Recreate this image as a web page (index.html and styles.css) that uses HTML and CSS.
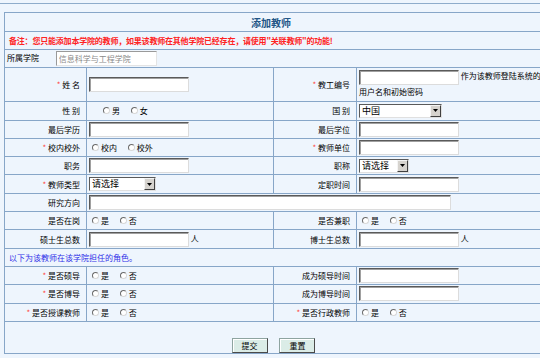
FILE: index.html
```html
<!DOCTYPE html>
<html lang="zh">
  <head>
    <meta charset="UTF-8" />
    <title>添加教师</title>
    <link rel="stylesheet" href="styles.css">
  </head>
  <body>
    <div class="topbar"></div>
    <form id="teacher-form">
      <table class="form-table">
        <colgroup>
          <col class="c1" />
          <col class="c2" />
          <col class="c3" />
          <col class="c4" />
        </colgroup>
        <tr class="title">
          <td colspan="4">添加教师</td>
        </tr>
        <tr class="note">
          <td colspan="4">备注：您只能添加本学院的教师，如果该教师在其他学院已经存在，请使用"关联教师"的功能!</td>
        </tr>
        <tr>
          <td colspan="4" class="college">
            所属学院 <input class="txt readonly" type="text" value="信息科学与工程学院" readonly />
          </td>
        </tr>
        <tr class="tall">
          <td class="label"><span class="req">*</span> 姓&nbsp;名</td>
          <td><input class="txt" type="text" /></td>
          <td class="label"><span class="req">*</span> 教工编号</td>
          <td class="top"><input class="txt" type="text" /> 作为该教师登陆系统的用户名和初始密码</td>
        </tr>
        <tr>
          <td class="label">性&nbsp;别</td>
          <td class="radios indent">
            <label><input type="radio" name="sex" />男</label>
            <label><input type="radio" name="sex" />女</label>
          </td>
          <td class="label">国&nbsp;别</td>
          <td>
            <span class="sel wide">
              <select><option>中国</option></select>
              <span class="arrow"><svg width="5" height="3" viewBox="0 0 5 3"><path d="M0 0h5L2.5 3z" fill="#000"/></svg></span>
            </span>
          </td>
        </tr>
        <tr>
          <td class="label">最后学历</td>
          <td><input class="txt" type="text" /></td>
          <td class="label">最后学位</td>
          <td><input class="txt" type="text" /></td>
        </tr>
        <tr>
          <td class="label"><span class="req">*</span> 校内校外</td>
          <td class="radios">
            <label><input type="radio" name="inout" />校内</label>
            <label><input type="radio" name="inout" />校外</label>
          </td>
          <td class="label"><span class="req">*</span> 教师单位</td>
          <td><input class="txt" type="text" /></td>
        </tr>
        <tr>
          <td class="label">职务</td>
          <td><input class="txt" type="text" /></td>
          <td class="label">职称</td>
          <td>
            <span class="sel short">
              <select><option>请选择</option></select>
              <span class="arrow"><svg width="5" height="3" viewBox="0 0 5 3"><path d="M0 0h5L2.5 3z" fill="#000"/></svg></span>
            </span>
          </td>
        </tr>
        <tr>
          <td class="label"><span class="req">*</span> 教师类型</td>
          <td>
            <span class="sel mid">
              <select><option>请选择</option></select>
              <span class="arrow"><svg width="5" height="3" viewBox="0 0 5 3"><path d="M0 0h5L2.5 3z" fill="#000"/></svg></span>
            </span>
          </td>
          <td class="label">定职时间</td>
          <td><input class="txt" type="text" /></td>
        </tr>
        <tr>
          <td class="label">研究方向</td>
          <td colspan="3"><input class="txt long" type="text" /></td>
        </tr>
        <tr>
          <td class="label">是否在岗</td>
          <td class="radios">
            <label><input type="radio" name="onduty" />是</label>
            <label><input type="radio" name="onduty" />否</label>
          </td>
          <td class="label">是否兼职</td>
          <td class="radios">
            <label><input type="radio" name="parttime" />是</label>
            <label><input type="radio" name="parttime" />否</label>
          </td>
        </tr>
        <tr>
          <td class="label">硕士生总数</td>
          <td><input class="txt" type="text" /> 人</td>
          <td class="label">博士生总数</td>
          <td><input class="txt" type="text" /> 人</td>
        </tr>
        <tr class="roles">
          <td colspan="4">以下为该教师在该学院担任的角色。</td>
        </tr>
        <tr>
          <td class="label"><span class="req">*</span> 是否硕导</td>
          <td class="radios">
            <label><input type="radio" name="master" />是</label>
            <label><input type="radio" name="master" />否</label>
          </td>
          <td class="label">成为硕导时间</td>
          <td><input class="txt" type="text" /></td>
        </tr>
        <tr>
          <td class="label"><span class="req">*</span> 是否博导</td>
          <td class="radios">
            <label><input type="radio" name="doctor" />是</label>
            <label><input type="radio" name="doctor" />否</label>
          </td>
          <td class="label">成为博导时间</td>
          <td><input class="txt" type="text" /></td>
        </tr>
        <tr>
          <td class="label"><span class="req">*</span> 是否授课教师</td>
          <td class="radios">
            <label><input type="radio" name="lecture" />是</label>
            <label><input type="radio" name="lecture" />否</label>
          </td>
          <td class="label"><span class="req">*</span> 是否行政教师</td>
          <td class="radios">
            <label><input type="radio" name="admin" />是</label>
            <label><input type="radio" name="admin" />否</label>
          </td>
        </tr>
        <tr class="actions">
          <td colspan="4">
            <button type="button" class="btn">提交</button>
            <button type="reset" class="btn">重置</button>
          </td>
        </tr>
      </table>
    </form>
  </body>
</html>
```

FILE: styles.css
```css
body {
  margin: 0;
  background: #eef5fd;
  font-family: "Noto Sans CJK SC", sans-serif;
  font-size: 8px;
  color: #000;
  overflow: hidden;
}

.topbar {
  height: 3px;
  border-bottom: 1px solid #8eaccb;
  margin-bottom: 8px;
}

form {
  margin: 0;
}

.form-table {
  border-collapse: collapse;
  table-layout: fixed;
  width: 543px;
  margin-left: 4px;
}

.c1 { width: 82px; }
.c2 { width: 187px; }
.c3 { width: 83px; }
.c4 { width: 191px; }

.form-table td {
  border: 1px solid #87a6c8;
  padding: 0 2px;
  height: 17.3px;
  line-height: 11px;
  white-space: nowrap;
}

.title td {
  height: 18px;
  text-align: center;
  padding-right: 12px;
  font-size: 10px;
  font-weight: bold;
  color: #225586;
}

.note td {
  height: 17px;
  padding-left: 4px;
  color: #f22;
  font-weight: bold;
  letter-spacing: -0.2px;
}

.college {
  padding-left: 3px;
}

.tall td {
  height: 32px;
}

.form-table td.top {
  white-space: normal;
  vertical-align: top;
  padding-top: 1px;
  line-height: 14px;
}

.label {
  text-align: right;
}

.form-table td.label {
  padding-right: 6px;
}

.req {
  color: #f44;
}

.txt {
  box-sizing: border-box;
  width: 100px;
  height: 15px;
  margin: 0;
  padding: 0 2px;
  border: 1px solid;
  border-color: #5a5a5a #dcdcdc #dcdcdc #5a5a5a;
  box-shadow: inset 1px 1px 0 #a0a0a0;
  background: #fff;
  font: inherit;
  vertical-align: middle;
}

.txt.long {
  width: 362px;
}

.txt.readonly {
  width: 101px;
  margin-left: 15px;
  color: #8a8a8a;
  border-color: #9a9a9a #e4e4e4 #e4e4e4 #9a9a9a;
  box-shadow: none;
}

.radios label {
  display: inline-flex;
  align-items: center;
  margin-left: 3px;
  margin-right: 6px;
}

.radios.indent label:first-child {
  margin-left: 14px;
}

.radios input {
  appearance: none;
  box-sizing: border-box;
  width: 7px;
  height: 7px;
  margin: 0 2px 0 0;
  border: 1px solid;
  border-color: #6a6a6a #d8d8d8 #d8d8d8 #6a6a6a;
  border-radius: 50%;
  background: #fff;
}

.sel {
  box-sizing: border-box;
  display: inline-flex;
  height: 14px;
  vertical-align: middle;
  border: 1px solid;
  border-color: #5a5a5a #e0e0e0 #e0e0e0 #5a5a5a;
  background: #fff;
}

.sel.wide { width: 83px; }
.sel.short { width: 50px; }
.sel.mid { width: 67px; }

.sel select {
  appearance: none;
  flex: 1;
  min-width: 0;
  height: 100%;
  margin: 0;
  padding: 0 0 0 2px;
  border: none;
  background: transparent;
  font: inherit;
  font-size: 9px;
  line-height: 12px;
}

.arrow {
  box-sizing: border-box;
  width: 11px;
  display: flex;
  align-items: center;
  justify-content: center;
  background: #d6d3ce;
  border: 1px solid;
  border-color: #f4f4f4 #404040 #404040 #f4f4f4;
}

.roles td {
  padding-left: 4px;
  color: #3030e8;
}

.actions td {
  height: 31px;
  vertical-align: bottom;
  text-align: center;
  padding: 0 5px 0 0;
}

.btn {
  box-sizing: border-box;
  width: 36px;
  height: 15px;
  margin: 0 5px;
  padding: 0;
  border: 1px solid;
  border-color: #8ea4a0 #4a4a4a #4a4a4a #8ea4a0;
  box-shadow: inset 1px 1px 0 #fff;
  background: #dbece7;
  font: inherit;
  vertical-align: bottom;
}
```
